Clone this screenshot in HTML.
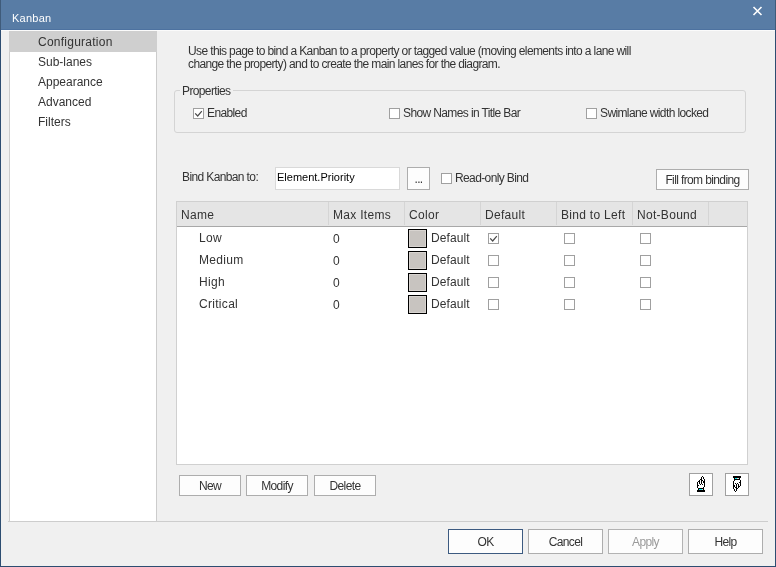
<!DOCTYPE html>
<html><head><meta charset="utf-8">
<style>
*{margin:0;padding:0;box-sizing:border-box}
html,body{width:776px;height:567px;overflow:hidden;background:#f0f0f0}
body{position:relative;font-family:"Liberation Sans",sans-serif;font-size:12px;color:#333}
.a{position:absolute}
.t{position:absolute;white-space:nowrap;line-height:14px;height:14px;will-change:transform}
.ct{letter-spacing:-0.62px}
.box{position:absolute;border:1px solid #ccc}
.btn{position:absolute;will-change:transform;border:1px solid #adadad;background:#fdfdfd;text-align:center;line-height:19px;letter-spacing:-0.62px;color:#333;padding-top:1px}
.cb{position:absolute;width:11px;height:11px;border:1px solid #a0a0a0;background:#fff}
.cb svg{position:absolute;left:0;top:0}
</style></head><body>
<!-- window frame -->
<div class="a" style="left:0;top:0;width:776px;height:30px;background:#587ca5"></div>
<div class="a" style="left:0;top:29px;width:776px;height:1px;background:#4d72a0"></div>
<div class="a" style="left:1px;top:30px;width:774px;height:1px;background:#fbfbfb"></div>
<div class="a" style="left:0;top:0;width:1px;height:567px;background:#2d4d71"></div><div class="a" style="left:0;top:0;width:1px;height:30px;background:#3f5b7a"></div>
<div class="a" style="left:775px;top:0;width:1px;height:567px;background:#2d4d71"></div><div class="a" style="left:775px;top:0;width:1px;height:30px;background:#3f5b7a"></div>
<div class="a" style="left:0;top:566px;width:776px;height:1px;background:#2d4d71"></div>
<div class="t" style="left:12px;top:11px;font-size:11px;color:#fff;letter-spacing:0.25px">Kanban</div>
<svg class="a" style="left:752px;top:6px" width="11" height="10" viewBox="0 0 11 10"><path d="M1.5 1 L9.5 9 M9.5 1 L1.5 9" stroke="#fff" stroke-width="1.6"/></svg>

<!-- left list -->
<div class="a" style="left:9px;top:31px;width:148px;height:491px;background:#fff;border-left:1px solid #ccc;border-right:1px solid #ccc"></div>
<div class="a" style="left:9px;top:31px;width:148px;height:21px;background:#cfcfcf"></div>
<div class="t" style="left:38px;top:35px;letter-spacing:0.25px">Configuration</div>
<div class="t" style="left:38px;top:55px">Sub-lanes</div>
<div class="t" style="left:38px;top:75px">Appearance</div>
<div class="t" style="left:38px;top:95px">Advanced</div>
<div class="t" style="left:38px;top:115px">Filters</div>
<div class="a" style="left:8px;top:521px;width:760px;height:1px;background:#cdcdcd"></div>

<!-- description -->
<div class="t ct" style="left:188px;top:44px">Use this page to bind a Kanban to a property or tagged value (moving elements into a lane will</div>
<div class="t ct" style="left:188px;top:57px">change the property) and to create the main lanes for the diagram.</div>

<!-- properties group -->
<div class="a" style="left:174px;top:90px;width:572px;height:43px;border:1px solid #d4d4d4;border-radius:3px"></div>
<div class="a" style="left:180px;top:85px;width:53px;height:10px;background:#f0f0f0"></div>
<div class="t ct" style="left:182px;top:84px">Properties</div>
<div class="cb" style="left:193px;top:108px"><svg width="11" height="11"><path d="M1.2 4.3 L3.7 7 L7.8 2.2" fill="none" stroke="#4a4a4a" stroke-width="1.2"/></svg></div>
<div class="t ct" style="left:207px;top:106px">Enabled</div>
<div class="cb" style="left:389px;top:108px"></div>
<div class="t ct" style="left:403px;top:106px">Show Names in Title Bar</div>
<div class="cb" style="left:586px;top:108px"></div>
<div class="t ct" style="left:600px;top:106px">Swimlane width locked</div>

<!-- bind row -->
<div class="t ct" style="left:182px;top:170px">Bind Kanban to:</div>
<div class="a" style="left:275px;top:167px;width:125px;height:23px;background:#fff;border:1px solid #d9d9d9"></div>
<div class="t" style="left:277px;top:170px;color:#000;font-size:11px;letter-spacing:0px">Element.Priority</div>
<div class="btn" style="left:407px;top:167px;width:23px;height:23px;line-height:21px">...</div>
<div class="cb" style="left:441px;top:173px"></div>
<div class="t ct" style="left:455px;top:171px">Read-only Bind</div>
<div class="btn" style="left:656px;top:169px;width:93px;height:21px">Fill from binding</div>

<!-- grid -->
<div class="a" style="left:176px;top:201px;width:572px;height:264px;background:#fff;border:1px solid #d0d0d0"></div>
<div class="a" style="left:177px;top:202px;width:570px;height:24px;background:#e5e5e5"></div>
<div class="a" style="left:177px;top:226px;width:570px;height:1px;background:#a8a8a8"></div>
<div class="a" style="left:328px;top:202px;width:1px;height:23px;background:#d5d5d5"></div>
<div class="a" style="left:404px;top:202px;width:1px;height:23px;background:#d5d5d5"></div>
<div class="a" style="left:480px;top:202px;width:1px;height:23px;background:#d5d5d5"></div>
<div class="a" style="left:556px;top:202px;width:1px;height:23px;background:#d5d5d5"></div>
<div class="a" style="left:632px;top:202px;width:1px;height:23px;background:#d5d5d5"></div>
<div class="a" style="left:708px;top:202px;width:1px;height:23px;background:#d5d5d5"></div>
<div class="t" style="left:181px;top:208px;letter-spacing:0.3px">Name</div>
<div class="t" style="left:333px;top:208px;letter-spacing:0.3px">Max Items</div>
<div class="t" style="left:409px;top:208px;letter-spacing:0.3px">Color</div>
<div class="t" style="left:485px;top:208px;letter-spacing:0.3px">Default</div>
<div class="t" style="left:561px;top:208px;letter-spacing:0.3px">Bind to Left</div>
<div class="t" style="left:637px;top:208px;letter-spacing:0.3px">Not-Bound</div>

<div class="t" style="left:199px;top:231px;letter-spacing:0.3px">Low</div>
<div class="t" style="left:333px;top:232px">0</div>
<div class="a" style="left:408px;top:229px;width:19px;height:19px;border:1px solid #000;background:#c8c4c0;box-shadow:inset 0 0 0 1px #d8d4d0"></div>
<div class="t" style="left:431px;top:231px;letter-spacing:0.1px">Default</div>
<div class="cb" style="left:488px;top:233px"><svg width="11" height="11"><path d="M1.2 4.3 L3.7 7 L7.8 2.2" fill="none" stroke="#4a4a4a" stroke-width="1.2"/></svg></div>
<div class="cb" style="left:564px;top:233px"></div>
<div class="cb" style="left:640px;top:233px"></div>
<div class="t" style="left:199px;top:253px;letter-spacing:0.3px">Medium</div>
<div class="t" style="left:333px;top:254px">0</div>
<div class="a" style="left:408px;top:251px;width:19px;height:19px;border:1px solid #000;background:#c8c4c0;box-shadow:inset 0 0 0 1px #d8d4d0"></div>
<div class="t" style="left:431px;top:253px;letter-spacing:0.1px">Default</div>
<div class="cb" style="left:488px;top:255px"></div>
<div class="cb" style="left:564px;top:255px"></div>
<div class="cb" style="left:640px;top:255px"></div>
<div class="t" style="left:199px;top:275px;letter-spacing:0.3px">High</div>
<div class="t" style="left:333px;top:276px">0</div>
<div class="a" style="left:408px;top:273px;width:19px;height:19px;border:1px solid #000;background:#c8c4c0;box-shadow:inset 0 0 0 1px #d8d4d0"></div>
<div class="t" style="left:431px;top:275px;letter-spacing:0.1px">Default</div>
<div class="cb" style="left:488px;top:277px"></div>
<div class="cb" style="left:564px;top:277px"></div>
<div class="cb" style="left:640px;top:277px"></div>
<div class="t" style="left:199px;top:297px;letter-spacing:0.3px">Critical</div>
<div class="t" style="left:333px;top:298px">0</div>
<div class="a" style="left:408px;top:295px;width:19px;height:19px;border:1px solid #000;background:#c8c4c0;box-shadow:inset 0 0 0 1px #d8d4d0"></div>
<div class="t" style="left:431px;top:297px;letter-spacing:0.1px">Default</div>
<div class="cb" style="left:488px;top:299px"></div>
<div class="cb" style="left:564px;top:299px"></div>
<div class="cb" style="left:640px;top:299px"></div>

<!-- bottom buttons -->
<div class="btn" style="left:179px;top:475px;width:62px;height:21px">New</div>
<div class="btn" style="left:246px;top:475px;width:62px;height:21px">Modify</div>
<div class="btn" style="left:314px;top:475px;width:62px;height:21px">Delete</div>
<div class="btn" style="left:689px;top:473px;width:24px;height:23px;border-color:#a0a0a0;background:#fff"></div>
<div class="btn" style="left:725px;top:473px;width:24px;height:23px;border-color:#a0a0a0;background:#fff"></div>

<svg class="a" style="left:696px;top:475px" width="12" height="18" shape-rendering="crispEdges"><rect x="6" y="1" width="1" height="1"/><rect x="5" y="2" width="1" height="1"/><rect x="7" y="2" width="1" height="1"/><rect x="5" y="3" width="1" height="1"/><rect x="7" y="3" width="1" height="1"/><rect x="4" y="4" width="1" height="1"/><rect x="5" y="4" width="1" height="1"/><rect x="8" y="4" width="1" height="1"/><rect x="3" y="5" width="1" height="1"/><rect x="5" y="5" width="1" height="1"/><rect x="6" y="5" width="1" height="1"/><rect x="8" y="5" width="1" height="1"/><rect x="2" y="6" width="1" height="1"/><rect x="3" y="6" width="1" height="1"/><rect x="5" y="6" width="1" height="1"/><rect x="7" y="6" width="1" height="1"/><rect x="8" y="6" width="1" height="1"/><rect x="1" y="7" width="1" height="1"/><rect x="3" y="7" width="1" height="1"/><rect x="5" y="7" width="1" height="1"/><rect x="7" y="7" width="1" height="1"/><rect x="8" y="7" width="1" height="1"/><rect x="1" y="8" width="1" height="1"/><rect x="3" y="8" width="1" height="1"/><rect x="5" y="8" width="1" height="1"/><rect x="8" y="8" width="1" height="1"/><rect x="1" y="9" width="1" height="1"/><rect x="4" y="9" width="1" height="1"/><rect x="6" y="9" width="1" height="1"/><rect x="8" y="9" width="1" height="1"/><rect x="1" y="10" width="1" height="1"/><rect x="2" y="10" width="1" height="1"/><rect x="8" y="10" width="1" height="1"/><rect x="1" y="11" width="1" height="1"/><rect x="8" y="11" width="1" height="1"/><rect x="1" y="12" width="1" height="1"/><rect x="7" y="12" width="1" height="1"/><rect x="2" y="13" width="1" height="1"/><rect x="3" y="13" width="1" height="1"/><rect x="4" y="13" width="1" height="1"/><rect x="5" y="13" width="1" height="1"/><rect x="6" y="13" width="1" height="1"/><rect x="7" y="13" width="1" height="1"/><rect x="2" y="14" width="1" height="1"/><rect x="7" y="14" width="1" height="1"/><rect x="1" y="15" width="1" height="1"/><rect x="2" y="15" width="1" height="1"/><rect x="3" y="15" width="1" height="1"/><rect x="4" y="15" width="1" height="1"/><rect x="5" y="15" width="1" height="1"/><rect x="6" y="15" width="1" height="1"/><rect x="7" y="15" width="1" height="1"/><rect x="8" y="15" width="1" height="1"/><rect x="1" y="16" width="1" height="1"/><rect x="2" y="16" width="1" height="1"/><rect x="3" y="16" width="1" height="1"/><rect x="4" y="16" width="1" height="1"/><rect x="5" y="16" width="1" height="1"/><rect x="6" y="16" width="1" height="1"/><rect x="7" y="16" width="1" height="1"/><rect x="8" y="16" width="1" height="1"/><rect x="3" y="14" width="1" height="1" fill="#00f0f0"/><rect x="4" y="14" width="1" height="1" fill="#00f0f0"/><rect x="5" y="14" width="1" height="1" fill="#00f0f0"/><rect x="6" y="14" width="1" height="1" fill="#e8d8d8"/></svg>
<svg class="a" style="left:731px;top:475px" width="12" height="18" shape-rendering="crispEdges"><rect x="2" y="1" width="1" height="1"/><rect x="3" y="1" width="1" height="1"/><rect x="4" y="1" width="1" height="1"/><rect x="5" y="1" width="1" height="1"/><rect x="6" y="1" width="1" height="1"/><rect x="7" y="1" width="1" height="1"/><rect x="8" y="1" width="1" height="1"/><rect x="9" y="1" width="1" height="1"/><rect x="2" y="2" width="1" height="1"/><rect x="3" y="2" width="1" height="1"/><rect x="4" y="2" width="1" height="1"/><rect x="5" y="2" width="1" height="1"/><rect x="6" y="2" width="1" height="1"/><rect x="7" y="2" width="1" height="1"/><rect x="8" y="2" width="1" height="1"/><rect x="9" y="2" width="1" height="1"/><rect x="3" y="3" width="1" height="1"/><rect x="8" y="3" width="1" height="1"/><rect x="3" y="4" width="1" height="1"/><rect x="4" y="4" width="1" height="1"/><rect x="5" y="4" width="1" height="1"/><rect x="6" y="4" width="1" height="1"/><rect x="7" y="4" width="1" height="1"/><rect x="8" y="4" width="1" height="1"/><rect x="3" y="5" width="1" height="1"/><rect x="9" y="5" width="1" height="1"/><rect x="2" y="6" width="1" height="1"/><rect x="9" y="6" width="1" height="1"/><rect x="2" y="7" width="1" height="1"/><rect x="8" y="7" width="1" height="1"/><rect x="9" y="7" width="1" height="1"/><rect x="2" y="8" width="1" height="1"/><rect x="4" y="8" width="1" height="1"/><rect x="6" y="8" width="1" height="1"/><rect x="9" y="8" width="1" height="1"/><rect x="2" y="9" width="1" height="1"/><rect x="5" y="9" width="1" height="1"/><rect x="7" y="9" width="1" height="1"/><rect x="9" y="9" width="1" height="1"/><rect x="2" y="10" width="1" height="1"/><rect x="3" y="10" width="1" height="1"/><rect x="5" y="10" width="1" height="1"/><rect x="7" y="10" width="1" height="1"/><rect x="9" y="10" width="1" height="1"/><rect x="2" y="11" width="1" height="1"/><rect x="3" y="11" width="1" height="1"/><rect x="5" y="11" width="1" height="1"/><rect x="7" y="11" width="1" height="1"/><rect x="8" y="11" width="1" height="1"/><rect x="2" y="12" width="1" height="1"/><rect x="4" y="12" width="1" height="1"/><rect x="5" y="12" width="1" height="1"/><rect x="7" y="12" width="1" height="1"/><rect x="2" y="13" width="1" height="1"/><rect x="5" y="13" width="1" height="1"/><rect x="6" y="13" width="1" height="1"/><rect x="3" y="14" width="1" height="1"/><rect x="5" y="14" width="1" height="1"/><rect x="3" y="15" width="1" height="1"/><rect x="5" y="15" width="1" height="1"/><rect x="4" y="16" width="1" height="1"/><rect x="4" y="3" width="1" height="1" fill="#00f0f0"/><rect x="5" y="3" width="1" height="1" fill="#00f0f0"/><rect x="6" y="3" width="1" height="1" fill="#e8d8d8"/><rect x="7" y="3" width="1" height="1" fill="#e8d8d8"/></svg>
<div class="btn" style="left:448px;top:529px;width:75px;height:25px;line-height:23px;border-color:#3c5a80">OK</div>
<div class="btn" style="left:528px;top:529px;width:75px;height:25px;line-height:23px">Cancel</div>
<div class="btn" style="left:608px;top:529px;width:75px;height:25px;line-height:23px;border-color:#b3b3b3;color:#9a9a9a">Apply</div>
<div class="btn" style="left:688px;top:529px;width:75px;height:25px;line-height:23px">Help</div>
</body></html>
